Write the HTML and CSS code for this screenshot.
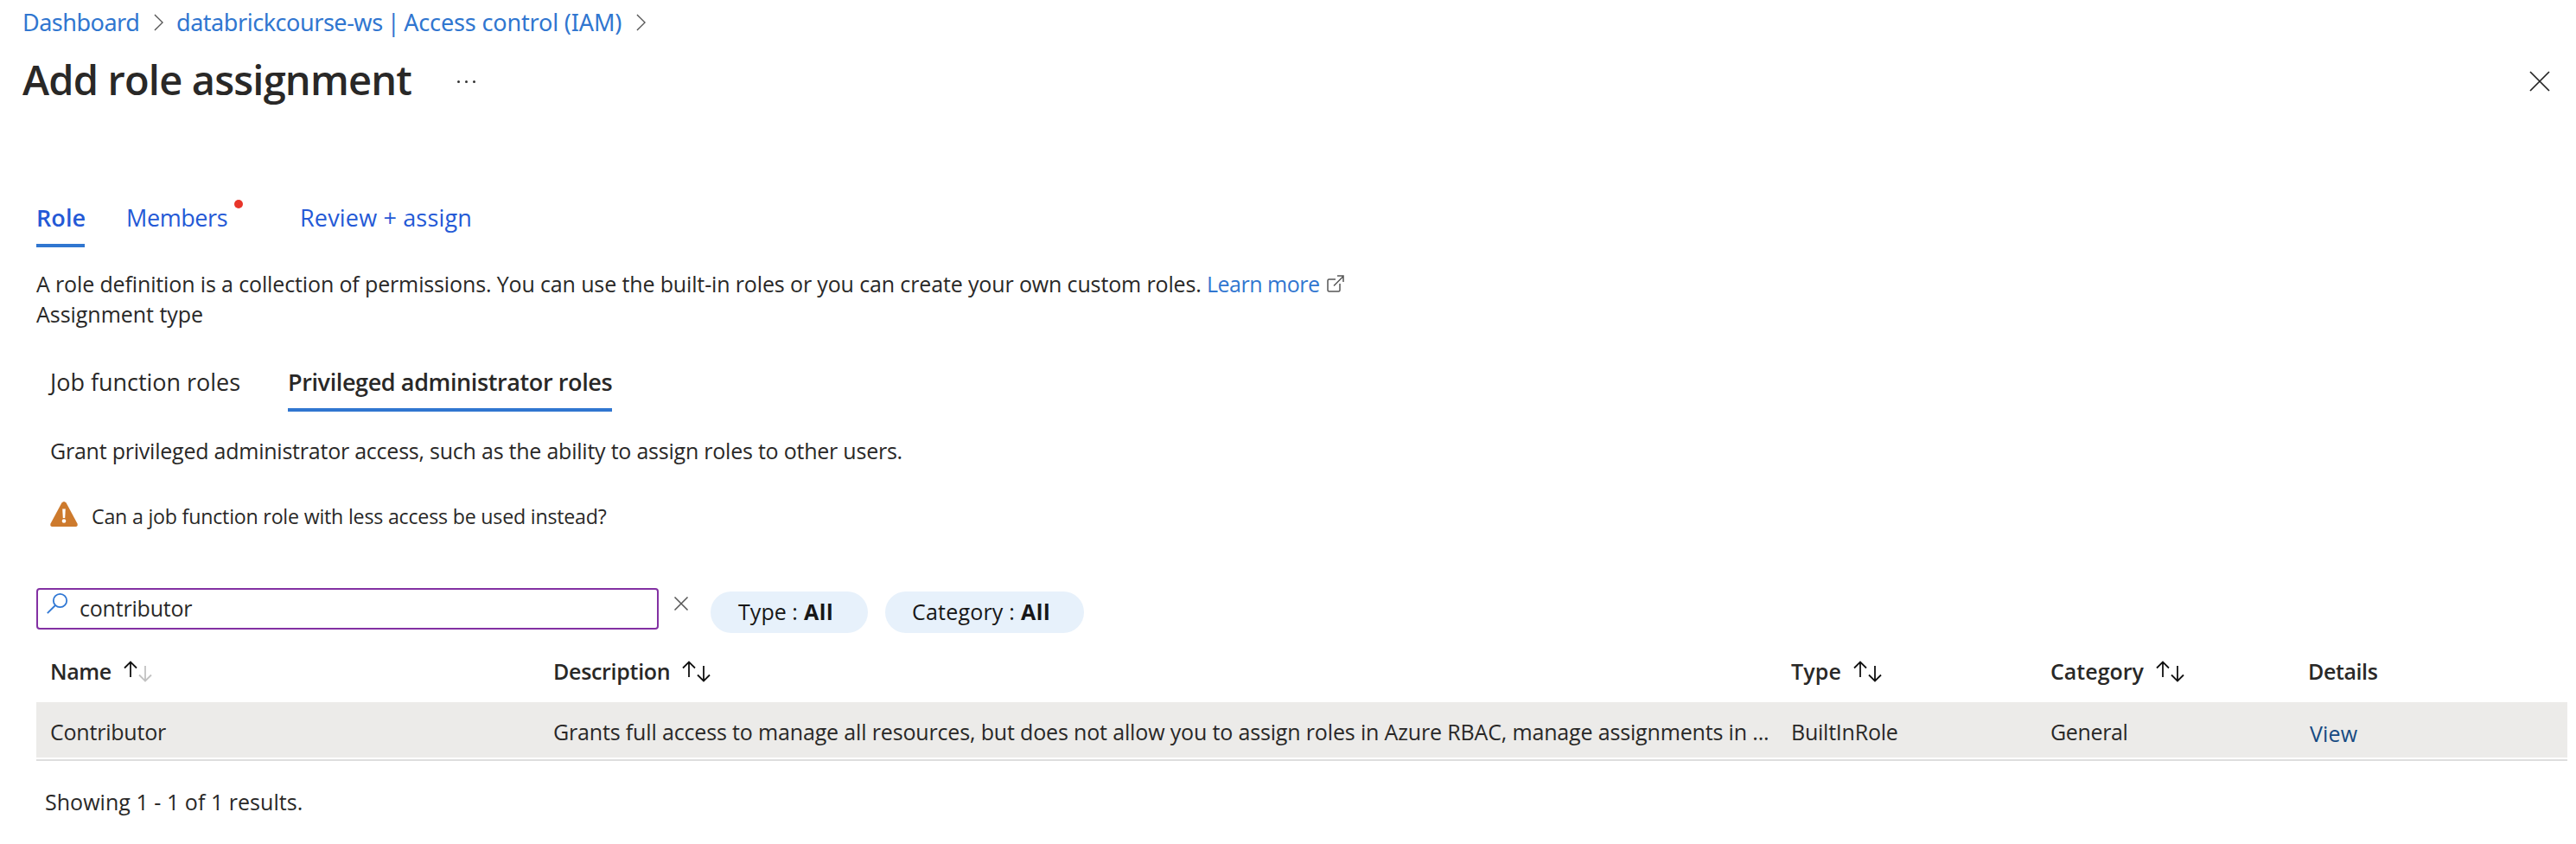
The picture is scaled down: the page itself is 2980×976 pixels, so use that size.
FILE: index.html
```html
<!DOCTYPE html>
<html lang="en">
<head>
<meta charset="utf-8">
<title>Add role assignment</title>
<link rel="stylesheet" href="styles.css">
</head>
<body>
<svg class="defs" width="0" height="0">
  <symbol id="up" viewBox="0 0 16 20"><path d="M8 19V1.5M1 8.500L8 1.500L15 8.500"/></symbol>
  <symbol id="down" viewBox="0 0 16 20"><path d="M8 1V18.500M1 11.500L8 18.500L15 11.500"/></symbol>
  <symbol id="chevron" viewBox="0 0 12 22"><path d="M1 1L11 11L1 21"/></symbol>
</svg>
<nav class="breadcrumb">
  <a class="crumb-home">Dashboard</a>
  <svg class="chevron"><use href="#chevron"/></svg>
  <a class="crumb-page"><span class="crumb-resource">databrickcourse-ws | </span>Access control (IAM)</a>
  <svg class="chevron"><use href="#chevron"/></svg>
</nav>
<header class="title-bar">
  <h1>Add role assignment</h1>
  <div class="more"><i></i><i></i><i></i></div>
  <svg class="close" viewBox="0 0 24 24"><path d="M1 1L23 23M23 1L1 23"/></svg>
</header>
<main>
  <div class="tabs">
    <a class="tab active">Role</a>
    <a class="tab members">Members<i class="dot"></i></a>
    <a class="tab review">Review + assign</a>
  </div>
  <div class="intro">
    <p class="intro-line"><span class="intro-text">A role definition is a collection of permissions. You can use the built-in roles or you can create your own custom roles.</span><a class="learn">Learn more</a><svg class="external" viewBox="0 0 20 20"><path d="M10 5H2.500Q1 5 1 6.500V17.500Q1 19 2.500 19H13.500Q15 19 15 17.500V10M8 12.500L19 1.500M12 1H19V8"/></svg></p>
    <p class="assign">Assignment type</p>
  </div>
  <div class="subtabs">
    <a class="subtab job">Job function roles</a>
    <a class="subtab selected">Privileged administrator roles</a>
  </div>
  <p class="grant">Grant privileged administrator access, such as the ability to assign roles to other users.</p>
  <div class="warning">
    <svg class="warn-icon" viewBox="0 0 32 29"><path d="M13.400 1.500Q16 -1.500 18.600 1.500L31.500 25.500Q32.500 28.700 29.500 29H2.500Q-0.500 28.700 0.500 25.500Z" fill="#cd7a2d"/><path d="M14.200 8.500H17.800L17.200 19H14.800Z" fill="#fff"/><circle cx="16" cy="22.500" r="2.300" fill="#fff"/></svg>
    <span>Can a job function role with less access be used instead?</span>
  </div>
  <div class="filters">
    <div class="search">
      <svg class="lens" viewBox="0 0 24 24"><circle cx="15.500" cy="8.500" r="7.700"/><path d="M10 14L0.800 23.200"/></svg>
      <span>contributor</span>
    </div>
    <svg class="clear" viewBox="0 0 16 16"><path d="M0.500 0.500L15.500 15.500M15.500 0.500L0.500 15.500"/></svg>
    <div class="pill pill-type"><span class="pt">Type :</span><b>All</b></div>
    <div class="pill pill-category"><span class="pc">Category :</span><b>All</b></div>
  </div>
  <div class="grid head">
    <div class="cell h-name">Name<span class="sort asc"><svg><use href="#up"/></svg><svg><use href="#down"/></svg></span></div>
    <div class="cell h-desc">Description<span class="sort"><svg><use href="#up"/></svg><svg><use href="#down"/></svg></span></div>
    <div class="cell h-type">Type<span class="sort"><svg><use href="#up"/></svg><svg><use href="#down"/></svg></span></div>
    <div class="cell h-cat">Category<span class="sort"><svg><use href="#up"/></svg><svg><use href="#down"/></svg></span></div>
    <div class="cell h-det">Details</div>
  </div>
  <div class="grid record">
    <div class="c-name">Contributor</div>
    <div class="c-desc">Grants full access to manage all resources, but does not allow you to assign roles in Azure RBAC, manage assignments in ...</div>
    <div class="c-type">BuiltInRole</div>
    <div class="c-cat">General</div>
    <a class="c-view">View</a>
  </div>
  <div class="rule"></div>
  <p class="results">Showing 1 - 1 of 1 results.</p>
</main>
</body>
</html>
```
FILE: styles.css
```css
* { box-sizing: border-box; }
body { margin: 0; background: #fff; color: #292827; font: 25px/36px "Open Sans", "Noto Sans", sans-serif; white-space: nowrap; overflow: hidden; }
p, h1 { margin: 0; }
svg { display: block; flex: none; fill: none; stroke: #555; stroke-width: 1.5; overflow: visible; }
.defs { position: absolute; }

.breadcrumb { display: flex; align-items: center; height: 40px; padding: 12px 0 0 26px; font: 27px/28px "Noto Sans", sans-serif; color: #3076d0; }
.crumb-home { width: 152px; letter-spacing: -.5px; }
.crumb-page { width: 532px; margin-left: 15px; letter-spacing: -.15px; }
.crumb-resource { letter-spacing: -.46px; word-spacing: -1.5px; }
.chevron { width: 11px; height: 20px; }

.title-bar { display: flex; margin-top: 22px; padding-left: 26px; height: 60px; }
h1 { width: 503px; font-size: 47px; line-height: 60px; font-weight: 600; letter-spacing: -.82px; }
.more { display: flex; gap: 6px; margin-top: 31px; }
.more i { width: 3px; height: 3px; border-radius: 50%; background: #333; }
.close { width: 24px; height: 24px; margin: 20px 30px 0 auto; stroke: #222; stroke-width: 1.7; }

main { padding: 112px 10px 0 42px; }
.tabs { display: flex; height: 52px; font-size: 27px; color: #2459d6; }
.tab.active { width: 56px; font-weight: 600; letter-spacing: .1px; border-bottom: 4px solid #3076d0; }
.tab.members { position: relative; margin-left: 48px; width: 117px; letter-spacing: -.4px; }
.dot { position: absolute; left: 125px; top: -3px; width: 10px; height: 10px; border-radius: 50%; background: #e8352a; }
.tab.review { margin-left: 84px; letter-spacing: .169px; }

.intro { margin-top: 25px; line-height: 35px; }
.intro-line { display: flex; }
.intro-text { width: 1354px; letter-spacing: -.135px; }
.learn { width: 139px; color: #3076d0; letter-spacing: -.5px; }
.external { width: 20px; height: 20px; margin-top: 7px; }
.assign { letter-spacing: -.03px; }

.subtabs { display: flex; gap: 55px; height: 52px; margin-top: 43px; padding-left: 16px; font-size: 27px; }
.job { width: 220px; letter-spacing: -.03px; }
.selected { width: 375px; font-weight: 600; letter-spacing: -.39px; border-bottom: 4px solid #3076d0; }

.grant { margin: 27px 0 0 16px; letter-spacing: -.228px; }
.warning { display: flex; margin: 40px 0 0 16px; font-size: 23.2px; letter-spacing: -.208px; gap: 16px; }
.warn-icon { width: 32px; height: 29px; margin-top: 1px; stroke: none; }

.filters { display: flex; height: 52px; margin-top: 65px; }
.search { display: flex; width: 720px; height: 48px; padding-left: 10px; border: 2px solid #8331a3; border-radius: 4px; line-height: 43px; letter-spacing: -.2px; }
.lens { width: 24px; height: 24px; margin: 4px 14px 0 0; stroke: #3078d4; stroke-width: 1.8; }
.clear { width: 16px; height: 16px; margin: 10px 26px 0 18px; }
.pill { display: flex; justify-content: space-between; height: 48px; margin-top: 4px; border-radius: 24px; background: #e7f1fb; line-height: 47px; color: #171717; }
.pill-type { width: 182px; padding: 0 40px 0 32px; }
.pill-category { width: 230px; margin-left: 20px; padding: 0 39px 0 31px; }
.pill b { width: 34px; letter-spacing: .5px; }
.pt { letter-spacing: .05px; }
.pc { letter-spacing: .2px; }

.grid { display: grid; grid-template-columns: 582px 1432px 300px 298px 1fr; padding-left: 16px; }
.head { margin-top: 26px; height: 54px; font-weight: 600; }
.cell { display: flex; }
.sort { display: flex; gap: 1px; margin: 6px 0 0 14px; }
.sort svg { width: 16px; height: 20px; stroke: #111; stroke-width: 1.8; }
.sort svg + svg { margin-top: 5px; }
.sort.asc svg + svg { stroke: #c2c2c2; }
.h-name { letter-spacing: -.4px; }
.h-desc { letter-spacing: -.3px; }
.h-type { letter-spacing: .13px; }
.h-cat { letter-spacing: 0; }
.h-det { letter-spacing: -.4px; }
.record { height: 64px; padding-top: 16px; background: #ecebe9; }
.c-name { letter-spacing: -.214px; }
.c-desc { letter-spacing: -.155px; }
.c-type { letter-spacing: -.23px; }
.c-cat { letter-spacing: -.35px; }
.c-view { padding: 2px 0 0 2px; color: #164a82; letter-spacing: .2px; }
.rule { margin-top: 2px; height: 2px; background: #dedede; }
.results { margin: 29px 0 0 10px; letter-spacing: .04px; }
```
